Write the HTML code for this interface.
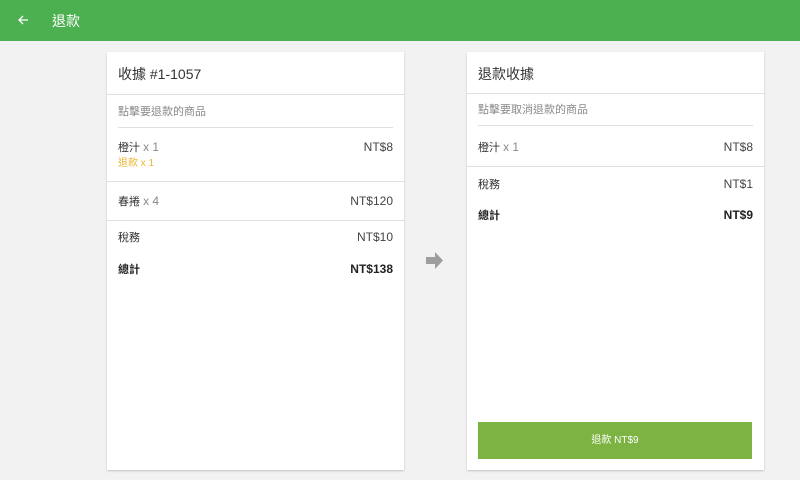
<!DOCTYPE html>
<html><head><meta charset="utf-8"><style>
*{margin:0;padding:0;box-sizing:border-box}
body{width:800px;height:480px;background:#f2f2f2;font-family:"Liberation Sans","Noto Sans CJK TC",sans-serif;position:relative;overflow:hidden;color:#333}
.bar{position:absolute;left:0;top:0;width:800px;height:41px;background:#4caf50;color:#fff}
.bar .t{position:absolute;left:52px;top:11px;font-size:14px}
.card{position:absolute;top:52px;width:297px;height:418px;background:#fff;box-shadow:0 1px 2px rgba(0,0,0,.2)}
.h{position:absolute;left:11px;font-size:14px;color:#333;line-height:18px}
.ab{position:absolute;font-size:11px;line-height:14px}
.r{position:absolute;right:11px;font-size:12px;line-height:14px;text-align:right;color:#444}
.line{position:absolute;height:1px;background:#e0e0e0}
.g{color:#888}
b{font-weight:bold;color:#222}
</style></head><body>
<div class="bar">
<svg style="position:absolute;left:17px;top:14px" width="12" height="12" viewBox="0 0 12 12"><path d="M11 6H2M6 2L2 6l4 4" stroke="#fff" stroke-width="1.3" fill="none"/></svg>
<div class="t">退款</div></div>

<div class="card" style="left:107px">
<div class="h" style="top:13px">收據 #1-1057</div>
<div class="line" style="left:0;right:0;top:42px"></div>
<div class="ab g" style="left:11px;top:53px">點擊要退款的商品</div>
<div class="line" style="left:11px;right:11px;top:75px"></div>
<div class="ab" style="left:11px;top:88px">橙汁 <span class="g" style="font-size:12px">x 1</span></div>
<div class="ab" style="left:11px;top:105px;color:#e8b62c;font-size:10px">退款 x 1</div>
<div class="r" style="top:88px">NT$8</div>
<div class="line" style="left:0;right:0;top:129px"></div>
<div class="ab" style="left:11px;top:142px">春捲 <span class="g" style="font-size:12px">x 4</span></div>
<div class="r" style="top:142px">NT$120</div>
<div class="line" style="left:0;right:0;top:168px"></div>
<div class="ab" style="left:11px;top:179px">稅務</div>
<div class="r" style="top:178px">NT$10</div>
<div class="ab" style="left:11px;top:211px"><b>總計</b></div>
<div class="r" style="top:210px"><b>NT$138</b></div>
</div>

<svg style="position:absolute;left:426px;top:252px" width="18" height="17" viewBox="0 0 18 17"><path d="M0 5h9V0l8 8.5-8 8.5v-5H0z" fill="#9e9e9e"/></svg>

<div class="card" style="left:467px">
<div class="h" style="top:13px">退款收據</div>
<div class="line" style="left:0;right:0;top:41px"></div>
<div class="ab g" style="left:11px;top:51px">點擊要取消退款的商品</div>
<div class="line" style="left:11px;right:11px;top:73px"></div>
<div class="ab" style="left:11px;top:88px">橙汁 <span class="g" style="font-size:12px">x 1</span></div>
<div class="r" style="top:88px">NT$8</div>
<div class="line" style="left:0;right:0;top:114px"></div>
<div class="ab" style="left:11px;top:126px">稅務</div>
<div class="r" style="top:125px">NT$1</div>
<div class="ab" style="left:11px;top:157px"><b>總計</b></div>
<div class="r" style="top:156px"><b>NT$9</b></div>
<div style="position:absolute;left:11px;top:370px;width:274px;height:37px;background:#7cb342;color:#fff;font-size:10px;text-align:center;line-height:37px">退款 NT$9</div>
</div>
</body></html>
